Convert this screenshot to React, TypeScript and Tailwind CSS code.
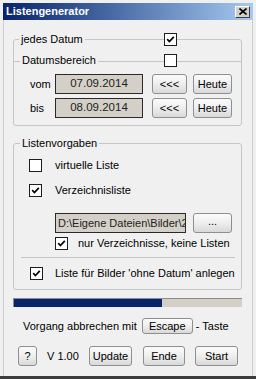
import React from "react";

function Check({ checked }: { checked?: boolean }) {
  return (
    <span className="flex h-[13px] w-[13px] shrink-0 items-center justify-center border border-[#1e1e1e] bg-white">
      {checked && (
        <svg width="9" height="9" viewBox="0 0 9 9">
          <path d="M1.2 4.2 L3.4 6.5 L7.8 1.8" stroke="#000" strokeWidth="1.7" fill="none" />
        </svg>
      )}
    </span>
  );
}

function Btn({ children, className = "" }: { children: React.ReactNode; className?: string }) {
  return (
    <div
      className={`flex shrink-0 items-center justify-center rounded-[3px] border border-[#8e8f8f] bg-linear-to-b from-[#fbfbfb] via-[#eeeeee] to-[#d9d9d9] text-[11px] text-black ${className}`}
    >
      {children}
    </div>
  );
}

function Field({ children, className = "" }: { children: React.ReactNode; className?: string }) {
  return (
    <div
      className={`flex h-[20px] shrink-0 items-center overflow-hidden whitespace-nowrap border border-[#2a2a2a] bg-[#d4d0c8] text-[#222] ${className}`}
    >
      {children}
    </div>
  );
}

export default function App() {
  return (
    <div className="flex h-[379px] w-[256px] flex-col border-b-[3px] border-[#3c3c3c] bg-[#f0f0f0] px-[3px] pt-[3px] font-['Liberation_Sans',Arial,sans-serif] text-[11px] text-black">
      {/* title bar */}
      <div className="flex h-[17px] shrink-0 items-center bg-linear-to-r from-[#0a246a] to-[#a6caf0] pl-[3px] pr-[3px]">
        <span className="text-[11px] font-bold text-white">Listengenerator</span>
        <div className="ml-auto flex h-[12px] w-[15px] items-center justify-center border border-t-white border-l-white border-r-[#404040] border-b-[#404040] bg-[#d4d0c8]">
          <svg width="8" height="7" viewBox="0 0 8 7">
            <path d="M0.5 0.5 L7.5 6.5 M7.5 0.5 L0.5 6.5" stroke="#000" strokeWidth="1.6" />
          </svg>
        </div>
      </div>

      {/* client */}
      <div className="flex flex-1 flex-col border-x border-[#cfcfcf] pl-[9px] pr-[10px]">
        {/* Datum group */}
        <div className="mt-[19px] rounded-[3px] border border-[#c6c6c6] pb-[7px]">
          <div className="-mt-[7px] flex h-[13px] items-center">
            <span className="ml-[5px] bg-[#f0f0f0] px-[2px] leading-[13px]">jedes Datum</span>
            <span className="ml-auto mr-[64px]">
              <Check checked />
            </span>
          </div>
          <div className="mt-[15px] border-t border-[#c6c6c6]">
            <div className="-mt-[8px] flex h-[13px] items-center">
              <span className="ml-[6px] bg-[#f0f0f0] px-[2px] leading-[13px]">Datumsbereich</span>
              <span className="ml-auto mr-[64px]">
                <Check />
              </span>
            </div>
            <div className="mt-[7px] flex h-[20px] items-center pl-[16px]">
              <span className="w-[25px]">vom</span>
              <Field className="w-[88px] justify-center text-[11.5px]">07.09.2014</Field>
              <Btn className="ml-[9px] h-[20px] w-[35px]">&lt;&lt;&lt;</Btn>
              <Btn className="ml-[6px] h-[20px] w-[39px]">Heute</Btn>
            </div>
            <div className="mt-[4px] flex h-[20px] items-center pl-[16px]">
              <span className="w-[25px]">bis</span>
              <Field className="w-[88px] justify-center text-[11.5px]">08.09.2014</Field>
              <Btn className="ml-[9px] h-[20px] w-[35px]">&lt;&lt;&lt;</Btn>
              <Btn className="ml-[6px] h-[20px] w-[39px]">Heute</Btn>
            </div>
          </div>
        </div>

        {/* Listenvorgaben group */}
        <div className="mt-[17px] rounded-[3px] border border-[#c6c6c6] pb-[9px]">
          <div className="-mt-[7px] flex h-[13px] items-center">
            <span className="ml-[6px] bg-[#f0f0f0] px-[2px] leading-[13px]">Listenvorgaben</span>
          </div>
          <div className="mt-[9px] flex h-[13px] items-center pl-[15px]">
            <Check />
            <span className="ml-[13px]">virtuelle Liste</span>
          </div>
          <div className="mt-[12px] flex h-[13px] items-center pl-[15px]">
            <Check checked />
            <span className="ml-[13px]">Verzeichnisliste</span>
          </div>
          <div className="mt-[16px] flex h-[20px] items-center pl-[41px]">
            <Field className="w-[131px] pl-[2px] text-[11px]">
              <span className="min-w-0 overflow-hidden">D:\Eigene Dateien\Bilder\2014</span>
            </Field>
            <Btn className="ml-[7px] h-[20px] w-[39px] pb-[4px]">...</Btn>
          </div>
          <div className="mt-[4px] flex h-[13px] items-center pl-[41px]">
            <Check checked />
            <span className="ml-[10px]">nur Verzeichnisse, keine Listen</span>
          </div>
          <div className="ml-[7px] mr-[6px] mt-[7px] border-t border-[#c6c6c6]" />
          <div className="mt-[9px] flex h-[13px] items-center pl-[16px]">
            <Check checked />
            <span className="ml-[12px]">Liste für Bilder 'ohne Datum' anlegen</span>
          </div>
        </div>

        {/* progress */}
        <div className="mt-[8px] flex h-[9px] border-l border-t border-[#8c8c8c] bg-[#d4d0c8]">
          <div className="h-full w-[148px] bg-[#0a246a]" />
        </div>

        {/* escape row */}
        <div className="mt-[11px] flex h-[16px] items-center pl-[10px]">
          <span>Vorgang abbrechen mit</span>
          <Btn className="ml-[5px] h-[16px] w-[51px]">Escape</Btn>
          <span className="ml-[3px]">- Taste</span>
        </div>

        {/* bottom buttons */}
        <div className="mt-[12px] flex h-[20px] items-center pl-[5px]">
          <Btn className="h-[20px] w-[19px]">?</Btn>
          <span className="w-[52px] pl-[10px]">V 1.00</span>
          <Btn className="h-[20px] w-[43px]">Update</Btn>
          <Btn className="ml-[11px] h-[20px] w-[42px]">Ende</Btn>
          <Btn className="ml-[10px] h-[20px] w-[43px]">Start</Btn>
        </div>
      </div>
    </div>
  );
}
